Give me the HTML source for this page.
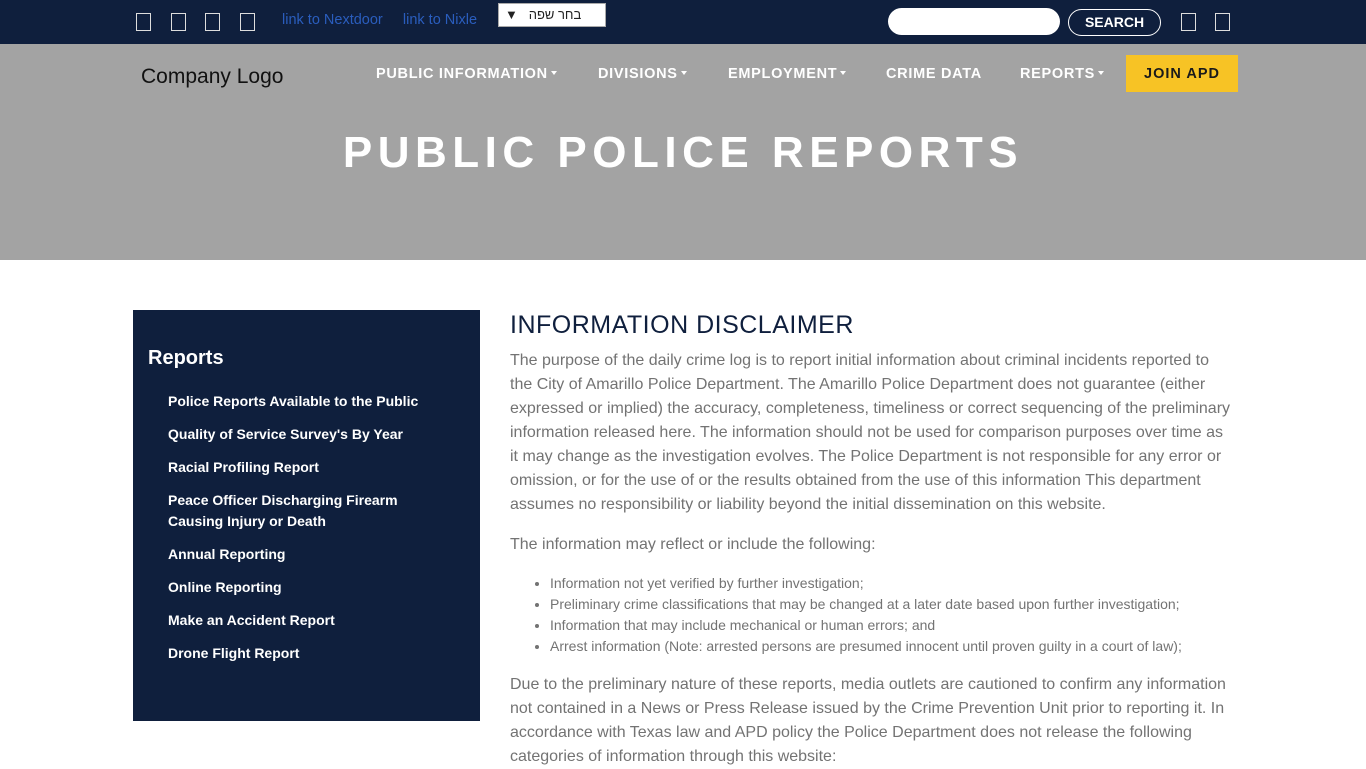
<!DOCTYPE html>
<html><head><meta charset="utf-8"><style>
*{box-sizing:border-box;margin:0;padding:0}
body{width:1366px;height:768px;overflow:hidden;font-family:"Liberation Sans",Arial,sans-serif;background:#fff;position:relative}
.top{position:absolute;left:0;top:0;width:1366px;height:44px;background:#0f1f3d}
.box{position:absolute;top:13px;width:15px;height:18px;border:1.5px solid #ddd}
.hdr{position:absolute;left:0;top:44px;width:1366px;height:216px;background:#a3a3a3}
.nav{position:absolute;top:66px;color:#fff;font-weight:bold;font-size:14.5px;letter-spacing:.7px}
.car{display:inline-block;border-left:3.5px solid transparent;border-right:3.5px solid transparent;border-top:4px solid #fff;vertical-align:3px;margin-left:3px}
h1{position:absolute;top:128px;left:0;width:1366px;text-align:center;color:#fff;font-size:44px;letter-spacing:5.5px;font-weight:bold;line-height:50px}
.side{position:absolute;left:133px;top:310px;width:347px;height:411px;background:#0f1f3d;color:#fff}
.side h3{position:absolute;left:15px;top:37px;font-size:20px}
.side a{position:absolute;left:35px;font-size:14px;font-weight:bold;line-height:21px}
.main{position:absolute;left:510px;top:310px;width:725px;color:#737373;font-size:16px;line-height:24px}
.main h2{color:#0f1f3d;font-size:25px;font-weight:normal;letter-spacing:.5px;margin-bottom:9px;line-height:30px}
ul{margin:16px 0 16px 40px;font-size:14px;line-height:21px}
</style></head><body>
<div class="top">
<div class="box" style="left:136px"></div><div class="box" style="left:171px"></div><div class="box" style="left:205px"></div><div class="box" style="left:240px"></div>
<div style="position:absolute;left:282px;top:12px;color:#2a5dbd;font-size:14.5px">link to Nextdoor &nbsp;&nbsp;&nbsp;&nbsp;link to Nixle</div>
<div style="position:absolute;left:498px;top:3px;width:108px;height:24px;background:#fff;border:1px solid #aaa;font-size:13px;padding:3px 6px;color:#222">▼ &nbsp;&nbsp;בחר שפה</div>
<div style="position:absolute;left:888px;top:8px;width:172px;height:27px;background:#fff;border-radius:14px"></div>
<div style="position:absolute;left:1068px;top:9px;width:93px;height:27px;border:1px solid #fff;border-radius:14px;color:#fff;font-weight:bold;font-size:14px;text-align:center;line-height:25px">SEARCH</div>
<div class="box" style="left:1181px"></div><div class="box" style="left:1215px"></div>
</div>
<div class="hdr"></div>
<div style="position:absolute;left:141px;top:65px;font-size:21px;color:#111">Company Logo</div>
<div class="nav" style="left:376px">PUBLIC INFORMATION<span class="car"></span></div>
<div class="nav" style="left:598px">DIVISIONS<span class="car"></span></div>
<div class="nav" style="left:728px">EMPLOYMENT<span class="car"></span></div>
<div class="nav" style="left:886px">CRIME DATA</div>
<div class="nav" style="left:1020px">REPORTS<span class="car"></span></div>
<div style="position:absolute;left:1126px;top:55px;width:112px;height:37px;background:#f7c325;color:#1a1a1a;font-weight:bold;font-size:14.5px;letter-spacing:1px;text-align:center;line-height:38px">JOIN APD</div>
<h1>PUBLIC POLICE REPORTS</h1>
<div class="side"><h3>Reports</h3>
<a style="top:81px">Police Reports Available to the Public</a>
<a style="top:114px">Quality of Service Survey's By Year</a>
<a style="top:147px">Racial Profiling Report</a>
<a style="top:180px">Peace Officer Discharging Firearm<br>Causing Injury or Death</a>
<a style="top:234px">Annual Reporting</a>
<a style="top:267px">Online Reporting</a>
<a style="top:300px">Make an Accident Report</a>
<a style="top:333px">Drone Flight Report</a>
</div>
<div class="main"><h2>INFORMATION DISCLAIMER</h2>
<p>The purpose of the daily crime log is to report initial information about criminal incidents reported to the City of Amarillo Police Department. The Amarillo Police Department does not guarantee (either expressed or implied) the accuracy, completeness, timeliness or correct sequencing of the preliminary information released here. The information should not be used for comparison purposes over time as it may change as the investigation evolves. The Police Department is not responsible for any error or omission, or for the use of or the results obtained from the use of this information This department assumes no responsibility or liability beyond the initial dissemination on this website.</p>
<p style="margin-top:16px">The information may reflect or include the following:</p>
<ul><li>Information not yet verified by further investigation;</li><li>Preliminary crime classifications that may be changed at a later date based upon further investigation;</li><li>Information that may include mechanical or human errors; and</li><li>Arrest information (Note: arrested persons are presumed innocent until proven guilty in a court of law);</li></ul>
<p>Due to the preliminary nature of these reports, media outlets are cautioned to confirm any information not contained in a News or Press Release issued by the Crime Prevention Unit prior to reporting it. In accordance with Texas law and APD policy the Police Department does not release the following categories of information through this website:</p>
</div>
</body></html>
